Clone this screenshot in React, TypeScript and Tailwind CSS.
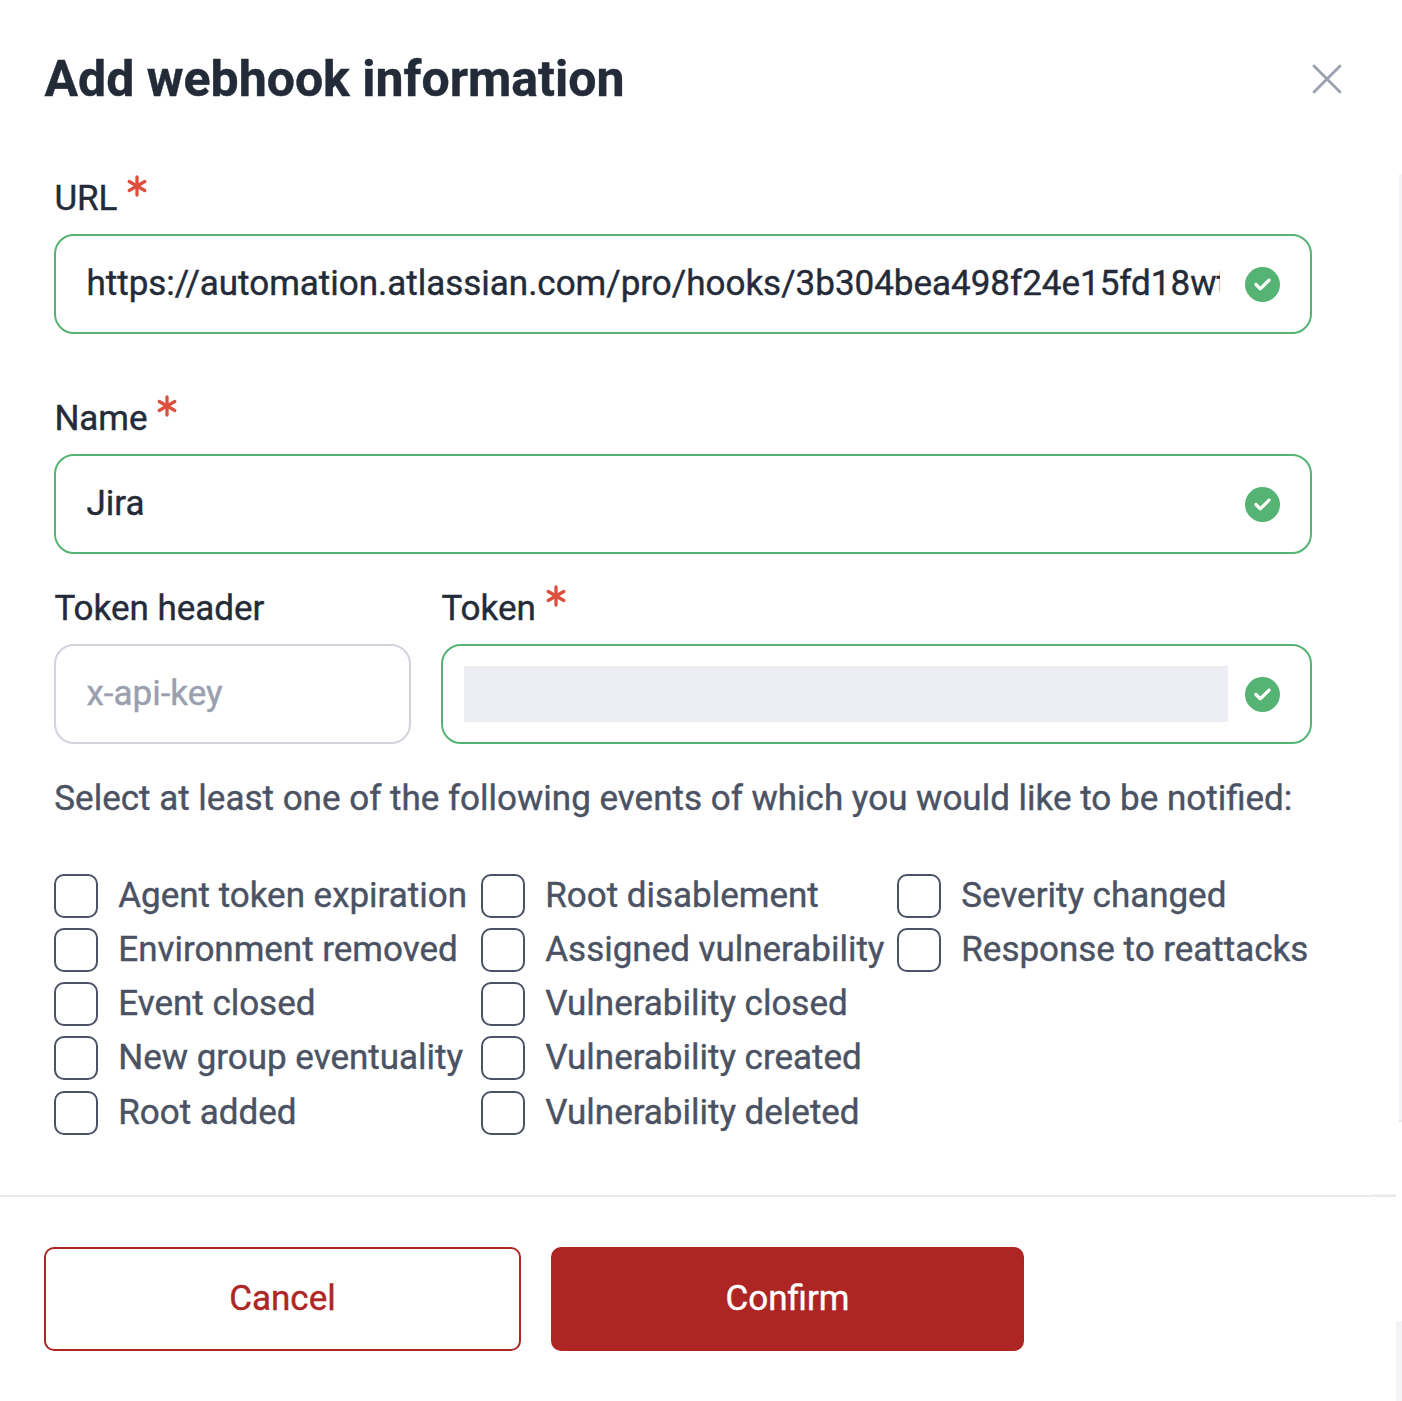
import { useState } from "react";
import { Asterisk } from "lucide-react";
import { FaCircleCheck } from "react-icons/fa6";

const eventColumns = [
  [
    "Agent token expiration",
    "Environment removed",
    "Event closed",
    "New group eventuality",
    "Root added",
  ],
  [
    "Root disablement",
    "Assigned vulnerability",
    "Vulnerability closed",
    "Vulnerability created",
    "Vulnerability deleted",
  ],
  ["Severity changed", "Response to reattacks"],
];

function Label({ text, required }: { text: string; required?: boolean }) {
  return (
    <label className="flex h-[50px] items-start pl-[0.4px] text-[35px] leading-[54px] tracking-[-0.02px] text-[#242b38]">
      {text}
      {required && (
        <Asterisk size={36} strokeWidth={2.2} className="ml-[1.8px] -mt-[4px] text-[#dd4f3e]" />
      )}
    </label>
  );
}

function Field({
  value,
  placeholder,
  valid,
  masked,
}: {
  value?: string;
  placeholder?: string;
  valid?: boolean;
  masked?: boolean;
}) {
  const [text, setText] = useState(value ?? "");

  return (
    <div
      className={`mt-[12px] flex h-[100px] items-center rounded-[20px] border-2 pr-[30px] ${
        masked ? "pl-[21px]" : "pl-[30.5px]"
      } ${valid ? "border-[#55b473]" : "border-[#d2d4dc]"}`}
    >
      {masked ? (
        <div className="mr-[17px] h-[56px] flex-1 bg-[#edeef3]" />
      ) : (
        <input
          type="text"
          value={text}
          placeholder={placeholder}
          onChange={(e) => setText(e.target.value)}
          className="mr-[25px] h-[60px] w-0 min-w-0 flex-1 pb-[2px] text-[35px] tracking-[-0.015px] text-[#242b38] outline-none placeholder:text-[#9ba0af]"
        />
      )}
      {valid && <FaCircleCheck size={35} className="shrink-0 text-[#55b473]" />}
    </div>
  );
}

function EventOption({ label }: { label: string }) {
  return (
    <label className="flex h-[54.15px] items-start whitespace-nowrap text-[35px] leading-[44px] tracking-[-0.02px] text-[#4a5263]">
      <input
        type="checkbox"
        className="mr-[20.3px] size-[44px] shrink-0 appearance-none rounded-[10px] border-2 border-[#4a5263]"
      />
      {label}
    </label>
  );
}

export default function App() {
  return (
    <div className="flex h-[1401px] w-[1402px] flex-col overflow-hidden bg-white font-['Roboto',sans-serif] [-webkit-text-stroke-width:0.4px]">
      {/* Header */}
      <div className="flex h-[174px] shrink-0 items-start justify-between pl-[44.5px] pr-[60px] pt-[43px]">
        <h1 className="text-[50px] font-bold leading-[72px] text-[#242b38]">
          Add webhook information
        </h1>
        <button type="button" className="mt-[21px]">
          <svg width="30" height="30" viewBox="0 0 30 30" fill="none">
            <path
              d="M2 2L28 28M28 2L2 28"
              stroke="#9ba0af"
              strokeWidth="2.8"
              strokeLinecap="round"
            />
          </svg>
        </button>
      </div>

      {/* Scrollable form body */}
      <div className="flex h-[948px] shrink-0">
        <div className="flex-1 pl-[54px] pr-[87px]">
          <div className="-mt-[2px]">
            <Label text="URL" required />
            <Field
              value="https://automation.atlassian.com/pro/hooks/3b304bea498f24e15fd18wtq"
              valid
            />
          </div>
          <div className="mt-[58px]">
            <Label text="Name" required />
            <Field value="Jira" valid />
          </div>
          <div className="mt-[28px] flex gap-[30px]">
            <div className="w-[357px]">
              <Label text="Token header" />
              <Field placeholder="x-api-key" />
            </div>
            <div className="flex-1">
              <Label text="Token" required />
              <Field valid masked />
            </div>
          </div>
          <p className="mt-[30px] whitespace-nowrap pl-[0.3px] text-[35px] leading-[50px] text-[#4a5263]">
            Select at least one of the following events of which you would like to be notified:
          </p>
          <div className="mt-[50px] grid grid-cols-[427px_416px_1fr]">
            {eventColumns.map((events) => (
              <div key={events[0]}>
                {events.map((event) => (
                  <EventOption key={event} label={event} />
                ))}
              </div>
            ))}
          </div>
        </div>
        <div className="w-[3px] border-b-2 border-[#e9e9ee] bg-[#f4f4f6]" />
      </div>

      {/* Footer */}
      <div className="mt-[72px] flex flex-1">
        <div className="flex-1">
          <div className="ml-auto h-px w-[24px] bg-[#f4f4f6]" />
          <div className="flex gap-[30px] border-t-2 border-[#e9e9ee] pl-[44px] pt-[50px]">
            <button
              type="button"
              className="h-[104px] w-[477px] rounded-[10px] border-2 border-[#ae2624] text-[35px] text-[#ae2624]"
            >
              Cancel
            </button>
            <button
              type="button"
              className="h-[104px] w-[473px] rounded-[10px] bg-[#ae2624] text-[35px] text-white"
            >
              Confirm
            </button>
          </div>
        </div>
        <div className="h-[80px] w-[6px] self-end bg-[#f4f4f6]" />
      </div>
    </div>
  );
}
